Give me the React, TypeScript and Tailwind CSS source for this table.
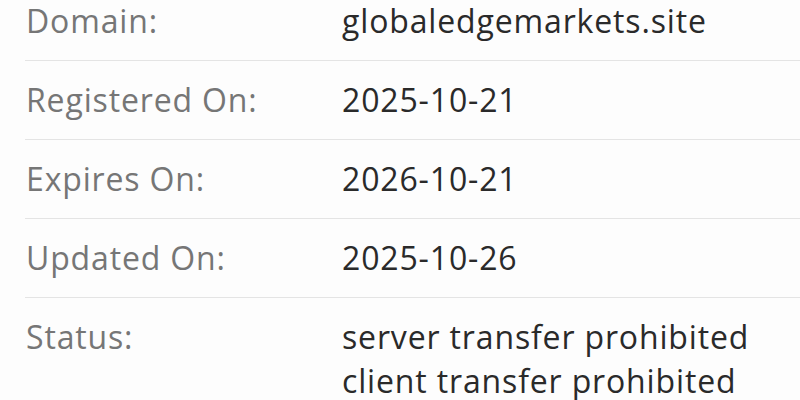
const rows: { label: string; value: string[] }[] = [
  { label: "Domain:", value: ["globaledgemarkets.site"] },
  { label: "Registered On:", value: ["2025-10-21"] },
  { label: "Expires On:", value: ["2026-10-21"] },
  { label: "Updated On:", value: ["2025-10-26"] },
  { label: "Status:", value: ["server transfer prohibited", "client transfer prohibited"] },
];

export default function App() {
  return (
    <div className="w-[800px] h-[400px] overflow-hidden bg-[#fdfdfd] font-['Open_Sans',sans-serif]">
      <div className="-mt-[18px] pl-[25px]">
        {rows.map((row, i) => (
          <div
            key={row.label}
            className={`flex py-[17px] text-[32px] leading-[44px] tracking-[0.85px] ${i < rows.length - 1 ? "border-b border-[#e4e4e4]" : ""}`}
          >
            <div className="w-[317px] shrink-0 pl-px text-[#767676]">{row.label}</div>
            <div className="text-[#2a2a2a]">
              {row.value.map((v) => (
                <div key={v}>{v}</div>
              ))}
            </div>
          </div>
        ))}
      </div>
    </div>
  );
}
